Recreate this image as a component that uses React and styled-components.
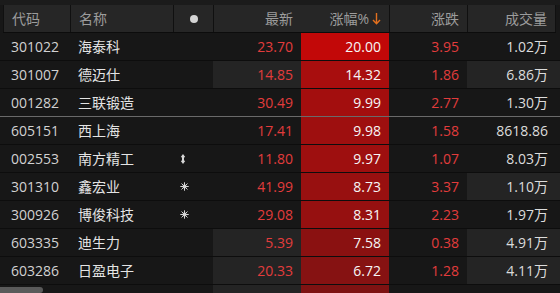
import React from "react";
import styled, { createGlobalStyle } from "styled-components";

const GlobalStyle = createGlobalStyle`
  html, body {
    margin: 0;
    padding: 0;
    background: #181818;
  }
  body {
    font-family: "Open Sans", "Noto Sans CJK SC", sans-serif;
  }
`;

const stocks = [
  { code: "301022", name: "海泰科", price: "23.70", pct: "20.00", chg: "3.95", vol: "1.02万", heat: "#c20808" },
  { code: "301007", name: "德迈仕", price: "14.85", pct: "14.32", chg: "1.86", vol: "6.86万", heat: "#a80e0e", hiPrice: true, hiVol: true },
  { code: "001282", name: "三联锻造", price: "30.49", pct: "9.99", chg: "2.77", vol: "1.30万", heat: "#a30e0e", divider: true },
  { code: "605151", name: "西上海", price: "17.41", pct: "9.98", chg: "1.58", vol: "8618.86", heat: "#9e0f0f" },
  { code: "002553", name: "南方精工", mark: "spindle", price: "11.80", pct: "9.97", chg: "1.07", vol: "8.03万", heat: "#9e0f0f" },
  { code: "301310", name: "鑫宏业", mark: "sun", price: "41.99", pct: "8.73", chg: "3.37", vol: "1.10万", heat: "#981010", hiVol: true },
  { code: "300926", name: "博俊科技", mark: "sun", price: "29.08", pct: "8.31", chg: "2.23", vol: "1.97万", heat: "#961010" },
  { code: "603335", name: "迪生力", price: "5.39", pct: "7.58", chg: "0.38", vol: "4.91万", heat: "#8a1111", hiPrice: true, hiVol: true },
  { code: "603286", name: "日盈电子", price: "20.33", pct: "6.72", chg: "1.28", vol: "4.11万", heat: "#861212", hiPrice: true, hiVol: true },
  { code: "", name: "", price: "", pct: "", chg: "", vol: "", heat: "#7e1212", hiPrice: true },
];

function Spindle() {
  return (
    <svg width="6" height="10" viewBox="0 0 6 10">
      <path d="M3 0 L5.2 3 L4 3.4 L4 6.6 L5.2 7 L3 10 L0.8 7 L2 6.6 L2 3.4 L0.8 3 Z" fill="#d6d6d6" />
    </svg>
  );
}

function Sun() {
  const rays = [0, 45, 90, 135, 180, 225, 270, 315];
  return (
    <svg width="9" height="9" viewBox="0 0 9 9">
      <circle cx="4.5" cy="4.5" r="2" fill="#d6d6d6" />
      {rays.map((a) => (
        <line
          key={a}
          x1="4.5"
          y1="4.5"
          x2={4.5 + 4.2 * Math.cos((a * Math.PI) / 180)}
          y2={4.5 + 4.2 * Math.sin((a * Math.PI) / 180)}
          stroke="#d6d6d6"
          strokeWidth="1"
        />
      ))}
    </svg>
  );
}

function SortArrow() {
  return (
    <svg width="9" height="13" viewBox="0 0 9 13">
      <path d="M4.5 1 L4.5 11.5 M1 8 L4.5 11.8 L8 8" stroke="#e3701e" strokeWidth="1.4" fill="none" />
    </svg>
  );
}

export default function App() {
  return (
    <>
      <GlobalStyle />
      <Screen>
        <TopStrip />
        <HeaderRow>
          <HeadCell $left>代码</HeadCell>
          <HeadCell $left>名称</HeadCell>
          <HeadCell $center>
            <Dot />
          </HeadCell>
          <HeadCell>最新</HeadCell>
          <HeadCell $noBorder>
            涨幅%
            <ArrowWrap>
              <SortArrow />
            </ArrowWrap>
          </HeadCell>
          <HeadCell>涨跌</HeadCell>
          <HeadCell $last>成交量</HeadCell>
        </HeaderRow>
        {stocks.map((s, i) => (
          <Row key={i} $divider={s.divider}>
            <CodeCell>{s.code}</CodeCell>
            <NameCell>{s.name}</NameCell>
            <MarkCell>
              {s.mark === "spindle" && <Spindle />}
              {s.mark === "sun" && <Sun />}
            </MarkCell>
            <NumCell $red $light={s.hiPrice}>{s.price}</NumCell>
            <PctCell style={{ background: s.heat }}>{s.pct}</PctCell>
            <NumCell $red>{s.chg}</NumCell>
            <VolCell $light={s.hiVol}>{s.vol}</VolCell>
          </Row>
        ))}
        <ScrollThumb />
      </Screen>
    </>
  );
}

const Screen = styled.div`
  position: relative;
  width: 560px;
  height: 293px;
  overflow: hidden;
  background: #171717;
  font-size: 14px;
`;

const TopStrip = styled.div`
  height: 5px;
  background: #1b1b1b;
`;

const HeaderRow = styled.div`
  display: grid;
  grid-template-columns: 67px 103px 40px 88px 88px 78px 1fr;
  height: 27px;
  margin: 0 4px 0 3px;
  background: #262626;
  border-bottom: 1px solid #0c0c0c;
  color: #9c9c9c;
`;

const HeadCell = styled.div`
  display: flex;
  align-items: center;
  justify-content: ${(p) => (p.$left ? "flex-start" : p.$center ? "center" : "flex-end")};
  padding: ${(p) => (p.$left ? "0 0 0 8px" : p.$center ? "0" : "0 8px 0 0")};
  border-left: ${(p) => (p.$noBorder ? "none" : "1px solid #101010")};
  border-right: ${(p) => (p.$last ? "1px solid #101010" : "none")};
  box-sizing: border-box;
  line-height: 27px;
  white-space: nowrap;
`;

const Dot = styled.span`
  width: 8px;
  height: 8px;
  border-radius: 50%;
  background: #d4d4d4;
`;

const ArrowWrap = styled.span`
  display: flex;
  margin-left: 3px;
`;

const Row = styled.div`
  display: grid;
  grid-template-columns: 67px 103px 40px 88px 88px 78px 1fr;
  height: 27px;
  padding-left: 3px;
  border-bottom: 1px solid ${(p) => (p.$divider ? "#6a6a6a" : "#0d0d0d")};
  line-height: 27px;
  white-space: nowrap;
`;

const CodeCell = styled.div`
  padding-left: 8px;
  color: #d2d2d2;
`;

const NameCell = styled.div`
  padding-left: 8px;
  color: #e4e4e4;
`;

const MarkCell = styled.div`
  display: flex;
  align-items: center;
  padding-left: 7px;
`;

const NumCell = styled.div`
  text-align: right;
  padding-right: 8px;
  color: ${(p) => (p.$red ? "#e23c3c" : "#dcdcdc")};
  background: ${(p) => (p.$light ? "#242424" : "transparent")};
`;

const PctCell = styled.div`
  text-align: right;
  padding-right: 8px;
  color: #f6f6f6;
`;

const VolCell = styled.div`
  text-align: right;
  padding-right: 12px;
  color: #dcdcdc;
  background: ${(p) => (p.$light ? "#242424" : "transparent")};
`;

const ScrollThumb = styled.div`
  position: absolute;
  left: 0;
  bottom: 0;
  width: 43px;
  height: 6px;
  border-radius: 0 3px 3px 0;
  background: #5a5a5a;
`;
